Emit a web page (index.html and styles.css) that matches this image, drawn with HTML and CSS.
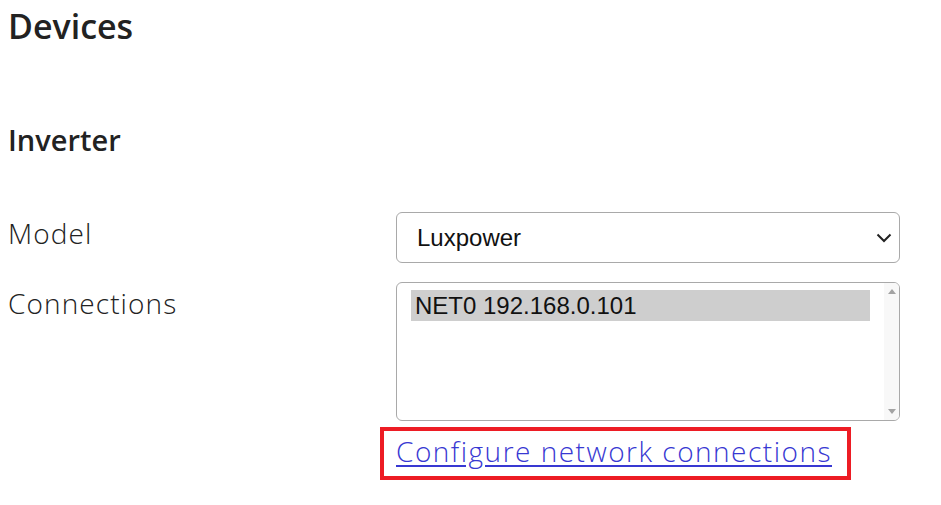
FILE: index.html
```html
<!DOCTYPE html>
<html lang="en">
<head>
    <meta charset="UTF-8">
    <meta name="viewport" content="width=device-width, initial-scale=1.0">
    <title>Devices</title>
    <link rel="stylesheet" href="styles.css">
</head>
<body>

<h1 class="page-title">Devices</h1>

<section class="device">
    <h2 class="device-title">Inverter</h2>

    <div class="field">
        <label class="field-label" for="model">Model</label>
        <div class="field-control">
            <div class="select-wrap">
                <select class="select" id="model">
                    <option>Luxpower</option>
                </select>
                <svg class="select-arrow" width="16" height="10" viewBox="0 0 16 10">
                    <path d="M1.5 1.5 L8 8 L14.5 1.5" fill="none" stroke="#222" stroke-width="2"/>
                </svg>
            </div>
        </div>
    </div>

    <div class="field">
        <div class="field-label">Connections</div>
        <div class="field-control">
            <!-- список подключений -->
            <div class="listbox">
                <div class="listbox-items">
                    <div class="listbox-option selected">NET0 192.168.0.101</div>
                </div>
                <div class="listbox-scroll">
                    <span class="scroll-up"></span>
                    <span class="scroll-down"></span>
                </div>
            </div>
            <div class="mark">
                <a class="link" href="#">Configure network connections</a>
            </div>
        </div>
    </div>
</section>

</body>
</html>
```

FILE: styles.css
```css
body {
    margin: 0;
    padding: 0 8px;
    background: #fff;
    color: #222;
    font-family: "Open Sans", sans-serif;
    font-size: 28px;
    line-height: 42px;
}

.page-title {
    margin: 5px 0 0;
    font-size: 34px;
    font-weight: 600;
    line-height: 43px;
}

.device-title {
    margin: 74px 0 0;
    font-size: 29px;
    font-weight: 600;
    line-height: 36px;
}

.field {
    display: flex;
    margin-top: 19px;
}

.device-title + .field {
    margin-top: 54px;
}

.field-label {
    width: 388px;
    flex: none;
    font-weight: 300;
    letter-spacing: 1.1px;
}

.field-control {
    width: 504px;
}

.select-wrap {
    position: relative;
}

.select {
    appearance: none;
    -webkit-appearance: none;
    display: block;
    width: 100%;
    height: 51px;
    margin: 0;
    padding: 0 20px;
    border: 1px solid #a9a9a9;
    border-radius: 6px;
    background: #fff;
    color: #111;
    font-family: "Liberation Sans", Arial, sans-serif;
    font-size: 24px;
}

.select-arrow {
    position: absolute;
    right: 8px;
    top: 21px;
    pointer-events: none;
}

.listbox {
    display: flex;
    height: 139px;
    box-sizing: border-box;
    border: 1px solid #a9a9a9;
    border-radius: 6px;
    overflow: hidden;
    font-family: "Liberation Sans", Arial, sans-serif;
    font-size: 24px;
    line-height: 31px;
    color: #111;
}

.listbox-items {
    flex: 1;
    padding: 7px 14px 0 14px;
}

.listbox-option {
    height: 31px;
    padding-left: 4px;
}

.listbox-option.selected {
    background: #cecece;
}

.listbox-scroll {
    width: 15px;
    flex: none;
    background: #f8f8f8;
    display: flex;
    flex-direction: column;
    justify-content: space-between;
    align-items: center;
    padding: 6px 0 6px;
}

.scroll-up,
.scroll-down {
    width: 0;
    height: 0;
    border-left: 4px solid transparent;
    border-right: 4px solid transparent;
}

.scroll-up {
    border-bottom: 5px solid #a3a3a3;
}

.scroll-down {
    border-top: 5px solid #a3a3a3;
}

/* красная рамка вокруг ссылки */
.mark {
    display: inline-block;
    margin: 6px 0 0 -16px;
    padding: 0 15px 5px 12px;
    border: 4px solid #ed1c24;
    line-height: 40px;
}

.link {
    color: #3838d2;
    font-weight: 300;
    letter-spacing: 1.5px;
    text-decoration: underline;
    text-underline-offset: 3px;
}
```
